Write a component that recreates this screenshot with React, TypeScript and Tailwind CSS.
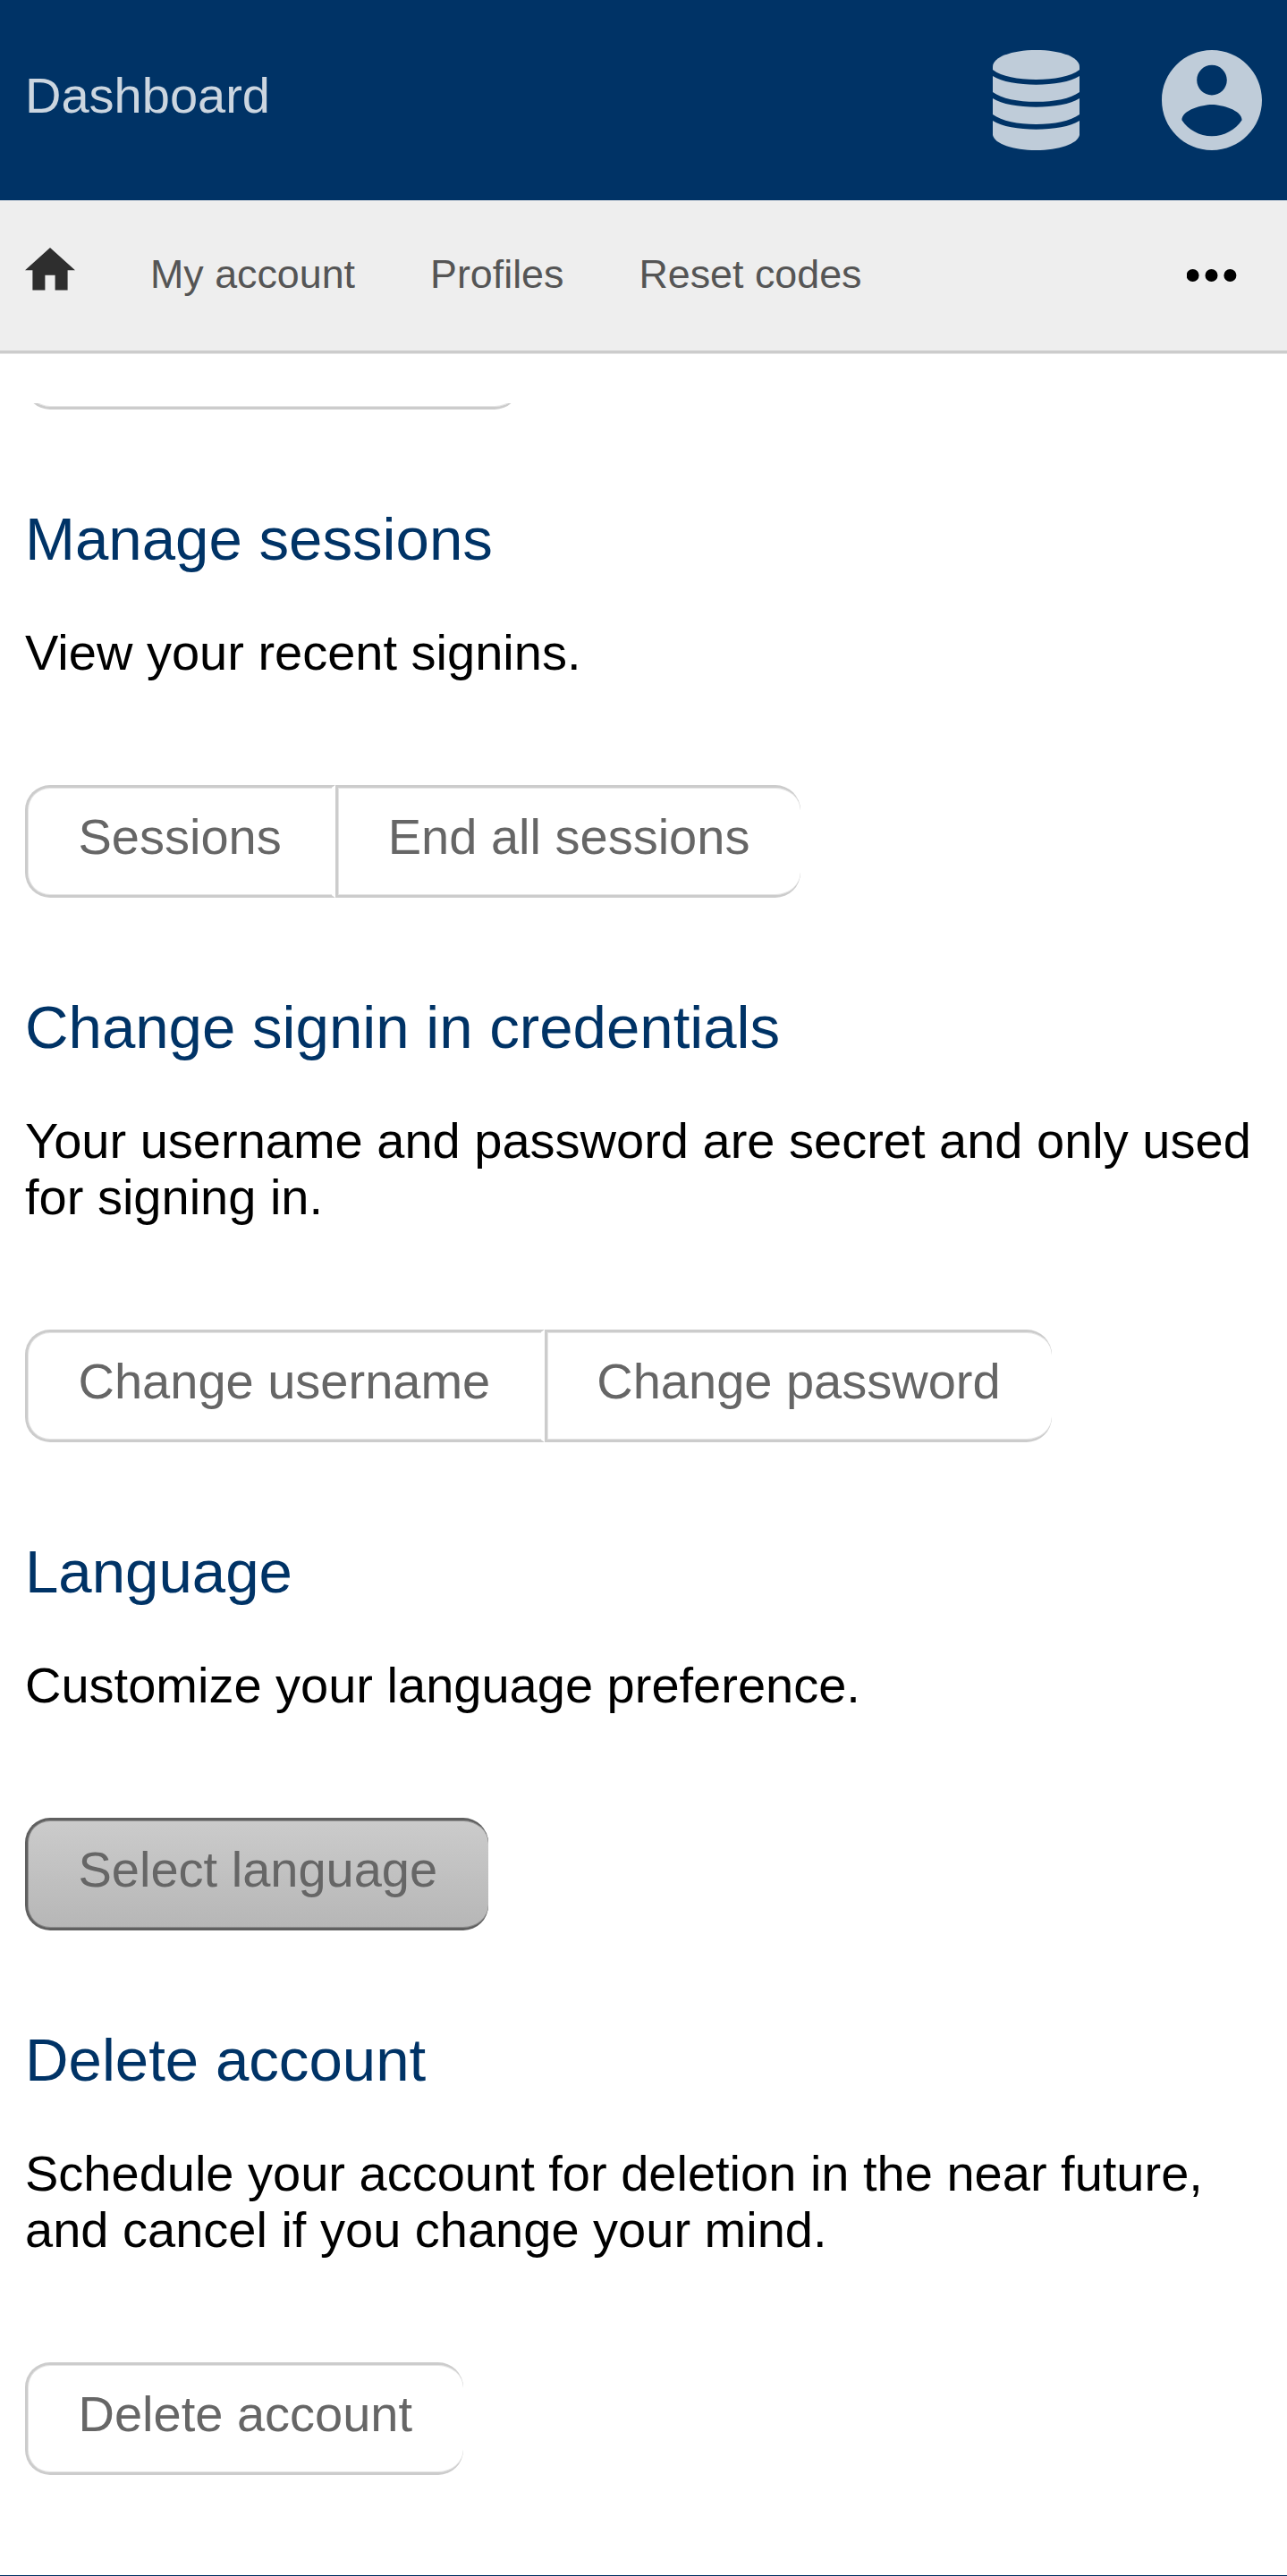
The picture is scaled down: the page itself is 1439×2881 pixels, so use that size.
import type { ReactNode } from "react";

function DatabaseIcon() {
  return (
    <svg className="h-[112px] w-[97px]" viewBox="0 0 97 112" fill="currentColor">
      <path d="M0 18.500C0 8 21 0 48.500 0S97 8 97 18.500V22C87 29.500 69 33 48.500 33S10 29.500 0 22Z" />
      <path d="M0 29C10 35.500 29 38.700 48.500 38.700S87 35.500 97 29V47C87 54.500 69 57.800 48.500 57.800S10 54.500 0 47Z" />
      <path d="M0 54C10 60.500 29 63.700 48.500 63.700S87 60.500 97 54V72C87 79.500 69 82.900 48.500 82.900S10 79.500 0 72Z" />
      <path d="M0 79C10 85.500 29 88.700 48.500 88.700S87 85.500 97 79V95C95 105 74 112 48.500 112S2 105 0 95Z" />
    </svg>
  );
}

function AccountIcon() {
  return (
    <svg className="size-[112px]" viewBox="2 2 20 20" fill="currentColor">
      <path d="M12 2C6.480 2 2 6.480 2 12s4.480 10 10 10 10-4.480 10-10S17.520 2 12 2zm0 3c1.660 0 3 1.340 3 3s-1.340 3-3 3-3-1.340-3-3 1.340-3 3-3zm0 14.200c-2.500 0-4.710-1.280-6-3.220.030-1.990 4-3.080 6-3.080 1.990 0 5.970 1.090 6 3.080-1.290 1.940-3.500 3.220-6 3.220z" />
    </svg>
  );
}

function HomeIcon() {
  return (
    <svg className="h-[47.6px] w-14" viewBox="2 3 20 17" fill="currentColor">
      <path d="M10 20v-6h4v6h5v-8h3L12 3 2 12h3v8z" />
    </svg>
  );
}

function MoreIcon() {
  return (
    <svg className="h-[14px] w-14" viewBox="0 0 56 14" fill="currentColor">
      <circle cx="6.600" cy="7" r="7" />
      <circle cx="27.500" cy="7" r="7" />
      <circle cx="48.400" cy="7" r="7" />
    </svg>
  );
}

const buttonBase =
  "h-[126px] border-y-[3px] border-l-[3px] pb-[11px] text-left leading-[63px] whitespace-nowrap text-[#666]";
const plain =
  "border-y-[#ccc] border-l-[#ccc] shadow-[inset_0_1px_0_#e5e5e5,inset_0_-1px_0_#e5e5e5,inset_1px_0_0_#e5e5e5]";
const active =
  "border-[#606060] bg-linear-to-b from-[#ccc] to-[#b6b6b6] bg-origin-border shadow-[inset_0_1px_0_#939393,inset_0_-1px_0_#8b8b8b,inset_1px_0_0_#8f8f8f]";

function ButtonBar({ labels, selected = false }: { labels: string[]; selected?: boolean }) {
  return (
    <div className="flex">
      {labels.map((label, i) => (
        <button
          key={label}
          className={[
            buttonBase,
            selected ? active : plain,
            i === 0 ? "rounded-l-[28px] pr-[56.5px] pl-[56.5px]" : "pr-[57px] pl-[55.5px]",
            i === labels.length - 1 ? "rounded-r-[28px]" : "border-r-4 border-r-white",
          ].join(" ")}
        >
          {label}
        </button>
      ))}
    </div>
  );
}

function Section({ title, text, children }: { title: string; text: ReactNode; children: ReactNode }) {
  return (
    <section className="pt-[106px]">
      <h2 className="text-[67.2px] leading-[77px] text-[#003366]">{title}</h2>
      <p className="mt-[57px] mb-[117px] leading-[63px]">{text}</p>
      {children}
    </section>
  );
}

export default function App() {
  return (
    <div className="h-[2881px] overflow-hidden border-b border-[#003366] bg-white font-['Liberation_Sans',Arial,sans-serif] text-[56px] text-black">
      <header className="flex h-[224px] items-center justify-between bg-[#003366] px-7 text-[#bfccd9]">
        <span className="-mt-[11px] leading-[63px] text-[#ccd6e0]">Dashboard</span>
        <div className="flex gap-[92px]">
          <DatabaseIcon />
          <AccountIcon />
        </div>
      </header>
      <nav className="flex h-[172px] items-start border-b border-[#e5e5e5] bg-[#eee] pl-7 text-[44.8px] text-[#555] shadow-[inset_0_-3px_0_#ccc]">
        <span className="mt-[53.4px] text-[#2e2e2e]">
          <HomeIcon />
        </span>
        <div className="mt-[57px] ml-[84px] flex gap-[84px] leading-[51px]">
          <span>My account</span>
          <span>Profiles</span>
          <span>Reset codes</span>
        </div>
        <span className="mt-[77px] mr-14 ml-auto text-black">
          <MoreIcon />
        </span>
      </nav>
      <main className="px-7 pt-[55px]">
        <div className="flex h-[7px] w-[553px] items-end overflow-hidden">
          <div className="h-[126px] w-full shrink-0 rounded-[28px] border-[3px] border-r-0 border-[#ccc] shadow-[inset_0_-1px_0_#e5e5e5]" />
        </div>
        <Section title="Manage sessions" text="View your recent signins.">
          <ButtonBar labels={["Sessions", "End all sessions"]} />
        </Section>
        <Section
          title="Change signin in credentials"
          text="Your username and password are secret and only used for signing in."
        >
          <ButtonBar labels={["Change username", "Change password"]} />
        </Section>
        <Section title="Language" text="Customize your language preference.">
          <ButtonBar labels={["Select language"]} selected />
        </Section>
        <Section
          title="Delete account"
          text="Schedule your account for deletion in the near future, and cancel if you change your mind."
        >
          <ButtonBar labels={["Delete account"]} />
        </Section>
      </main>
    </div>
  );
}
